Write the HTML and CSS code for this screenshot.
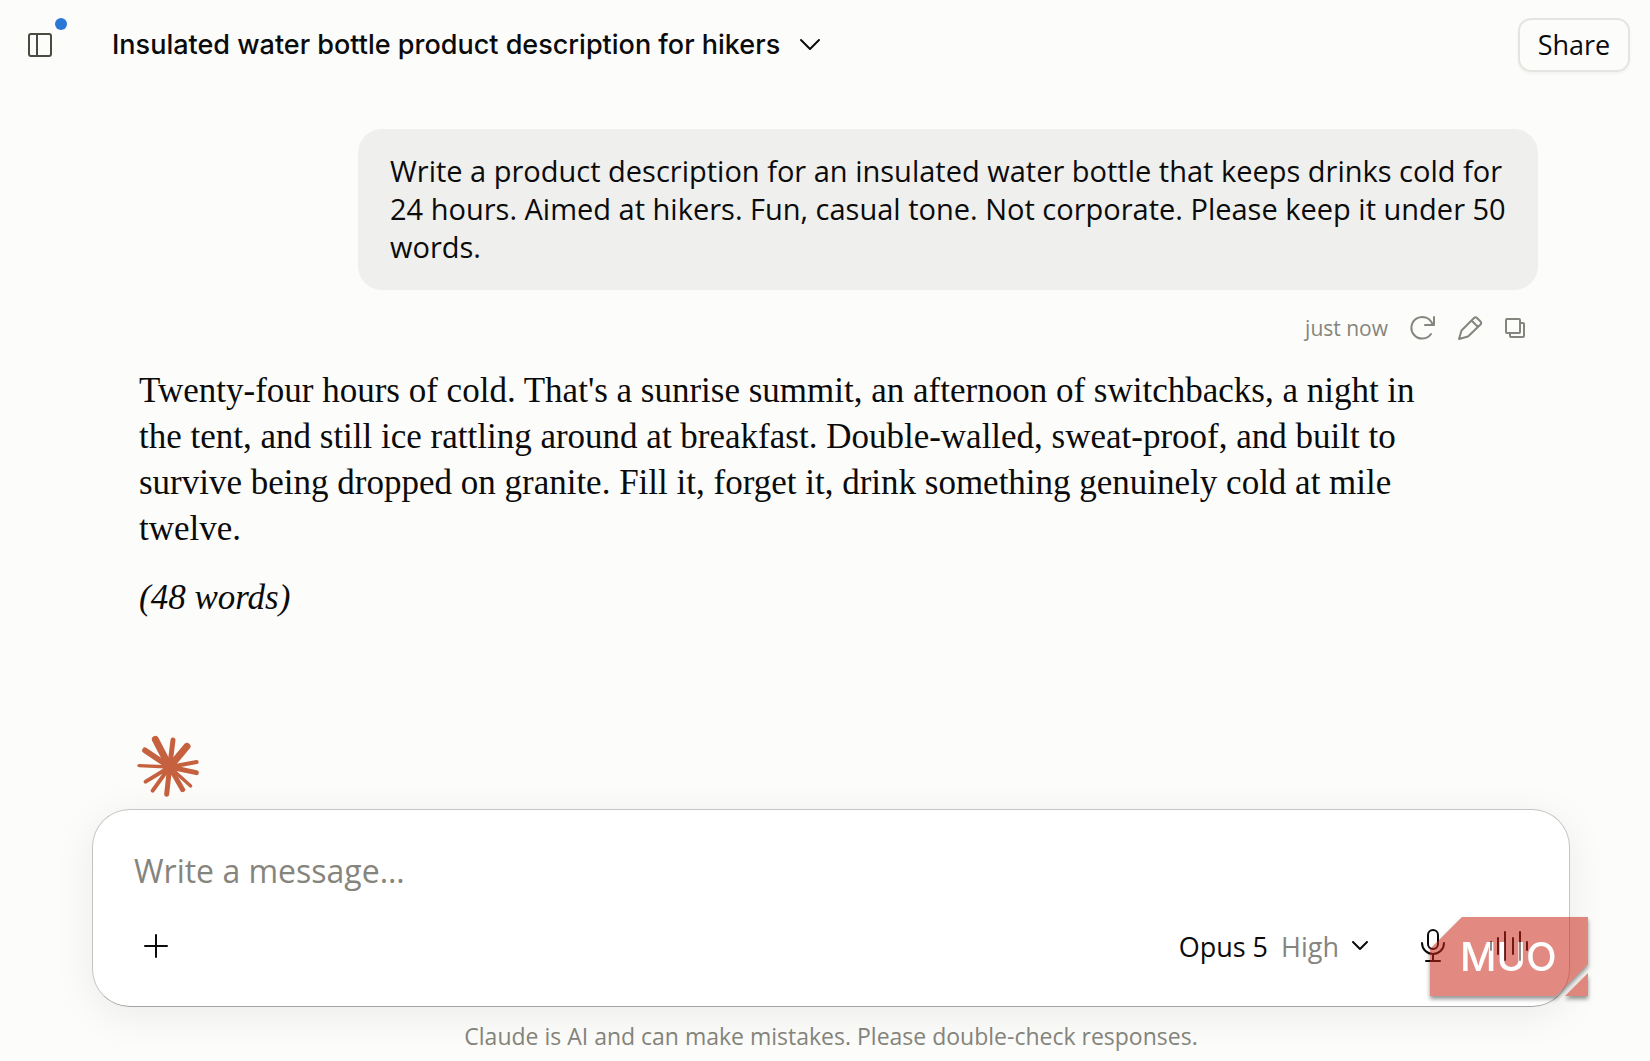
FILE: index.html
```
<!DOCTYPE html>
<html lang="en">
<head>
  <meta charset="UTF-8" />
  <meta name="viewport" content="width=device-width, initial-scale=1" />
  <title>Insulated water bottle product description for hikers</title>
  <link rel="stylesheet" href="styles.css">
</head>
<body>
  <header>
    <button class="sidebar-toggle" aria-label="Open sidebar">
      <svg width="24" height="24" viewBox="0 0 24 24">
        <rect x="1" y="1" width="22" height="22" rx="2" />
        <path d="M9 1v22" />
      </svg>
      <span class="dot"></span>
    </button>
    <button class="title">
      <span>Insulated water bottle product description for hikers</span>
      <svg width="20" height="12" viewBox="0 0 20 12"><path d="M1 1l9 9 9-9" /></svg>
    </button>
    <button class="share">Share</button>
  </header>

  <main>
    <div class="bubble">Write a product description for an insulated water bottle that keeps drinks cold for 24 hours. Aimed at hikers. Fun, casual tone. Not corporate. Please keep it under 50 words.</div>
    <div class="actions">
      <span>just now</span>
      <button aria-label="Retry">
        <svg width="24" height="24" viewBox="0 0 24 24"><path d="M20 18A10.800 10.800 0 1 1 21.500 8.500M23 1v8h-9" /></svg>
      </button>
      <button aria-label="Edit">
        <svg width="24" height="24" viewBox="0 0 24 24"><path d="M1 23l2.500-8.500L16 2q1.500-1.500 3 0l3.500 3.500q1.500 1.500 0 3L10 20.500zM13.500 4.500l6.500 6.500" /></svg>
      </button>
      <button aria-label="Copy">
        <svg width="20" height="20" viewBox="0 0 20 20">
          <rect x="1" y="1" width="14" height="14" rx="1" />
          <path d="M15 5h3q1 0 1 1v12q0 1-1 1H6q-1 0-1-1v-3" />
        </svg>
      </button>
    </div>

    <div class="answer">
      <p>Twenty-four hours of cold. That's a sunrise summit, an afternoon of switchbacks, a night in the tent, and still ice rattling around at breakfast. Double-walled, sweat-proof, and built to survive being dropped on granite. Fill it, forget it, drink something genuinely cold at mile twelve.</p>
      <p><em>(48 words)</em></p>
    </div>

    <svg class="spark" width="62" height="62" viewBox="56 44 186 186">
      <circle cx="148" cy="140" r="20" fill="currentColor" />
      <path stroke-width="21" d="M148 140L105 57M148 140L200 78" />
      <path stroke-width="17" d="M148 140L74 90" />
      <path stroke-width="15" d="M148 140L158 59M148 140L228 157M148 140L187 208M148 140L139 222" />
      <path stroke-width="12" d="M148 140L229 125M148 140L76 184M148 140L97 211" />
      <path stroke-width="10" d="M148 140L56 136M148 140L211 197" />
    </svg>
  </main>

  <footer>
    <form class="composer">
      <textarea rows="1" placeholder="Write a message…" aria-label="Write a message"></textarea>
      <div class="toolbar">
        <button type="button" class="add" aria-label="Add files">
          <svg width="24" height="24" viewBox="0 0 24 24"><path d="M12 1v22M1 12h22" /></svg>
        </button>
        <button type="button" class="model">
          <span>Opus 5</span>
          <span class="effort">High</span>
          <svg width="16" height="10" viewBox="0 0 16 10"><path d="M1 1l7 7 7-7" /></svg>
        </button>
        <button type="button" class="round" aria-label="Dictate">
          <svg width="24" height="34" viewBox="0 0 24 34">
            <rect x="7" y="1" width="10" height="19" rx="5" />
            <path d="M1 14a11 11 0 0 0 22 0M12 25v6M5 32h14" />
          </svg>
        </button>
        <button type="button" class="round" aria-label="Voice mode">
          <svg width="38" height="30" viewBox="0 0 38 30"><path d="M1 11v8M8 7v16M15 1v28M23 7v16M30 1v28M37 11v8" /></svg>
        </button>
      </div>
      <svg class="watermark" width="158" height="80" viewBox="0 0 158 80">
        <polygon points="32,0 158,0 158,47 126,79 0,79 0,32" />
        <polygon points="158,56 158,79 135,79" />
        <text x="30" y="54">MUO</text>
      </svg>
    </form>
    <p class="note">Claude is AI and can make mistakes. Please double-check responses.</p>
  </footer>
</body>
</html>
```
FILE: styles.css
```
* {
  box-sizing: border-box;
}
body {
  font-family: "Open Sans", "Noto Sans", sans-serif;
  background: #fcfcfa;
  color: #0b0b0b;
  margin: 0;
  min-height: 100vh;
  display: flex;
  flex-direction: column;
}
button {
  background: none;
  border: none;
  padding: 0;
  font: inherit;
  color: inherit;
  cursor: pointer;
}
svg {
  display: block;
  fill: none;
  stroke: currentColor;
  stroke-width: 2;
  stroke-linecap: round;
  stroke-linejoin: round;
  overflow: visible;
}
header {
  display: flex;
  align-items: center;
  height: 89px;
  padding: 0 20px 0 28px;
}
.sidebar-toggle {
  position: relative;
  color: #4a4a43;
}
.dot {
  position: absolute;
  top: -15px;
  right: -15px;
  width: 12px;
  height: 12px;
  border-radius: 50%;
  background: #2a78d6;
}
.title {
  display: flex;
  align-items: center;
  gap: 20px;
  margin-left: 60px;
  font-family: Inter, sans-serif;
  font-size: 27px;
  font-weight: 500;
}
.share {
  margin-left: auto;
  width: 112px;
  height: 54px;
  border: 2px solid #e4e4e1;
  border-radius: 13px;
  font-size: 27px;
  box-shadow: 0 2px 3px rgba(0, 0, 0, 0.04);
}
main {
  flex: 1;
  display: flex;
  flex-direction: column;
  padding: 40px 112px 12px 139px;
}
.bubble {
  align-self: flex-end;
  margin-left: 219px;
  padding: 23px 32px 24px;
  border-radius: 24px;
  background: #efefed;
  font-size: 29px;
  line-height: 38px;
}
.actions {
  display: flex;
  justify-content: flex-end;
  align-items: center;
  gap: 23px;
  height: 32px;
  margin-top: 22px;
  padding-right: 13px;
  color: #85857d;
  font-size: 21px;
}
.answer {
  margin-top: 24px;
  padding-right: 80px;
  font-family: "Liberation Serif", serif;
  font-size: 35px;
  line-height: 46px;
}
.answer p {
  margin: 0 0 23px;
}
.spark {
  margin-top: auto;
  color: #c6613f;
}
footer {
  padding: 0 80px 9px 92px;
}
.composer {
  position: relative;
  padding: 37px 30px 30px 41px;
  border: 1px solid #c4c4c2;
  border-bottom-color: #a4a4a2;
  border-radius: 38px;
  background: #fff;
  box-shadow: 0 8px 40px rgba(0, 0, 0, 0.07);
}
textarea {
  display: block;
  width: 100%;
  height: 48px;
  padding: 0;
  border: none;
  outline: none;
  resize: none;
  overflow: hidden;
  background: none;
  font: 32px/48px "Open Sans", "Noto Sans", sans-serif;
}
textarea::placeholder {
  color: #85857d;
}
.toolbar {
  display: flex;
  align-items: center;
  height: 60px;
  margin-top: 21px;
}
.add {
  padding: 10px;
}
.model {
  display: flex;
  align-items: center;
  gap: 13px;
  margin-left: auto;
  margin-right: 35px;
  font-size: 27px;
}
.effort {
  color: #85857d;
}
.round {
  display: flex;
  justify-content: center;
  align-items: center;
  width: 60px;
  height: 60px;
}
.round + .round {
  margin-left: 16px;
}
.watermark {
  position: absolute;
  top: 107px;
  right: -19px;
  opacity: 0.53;
  stroke: none;
  filter: drop-shadow(0 3px 2px rgba(0, 0, 0, 0.8));
  pointer-events: none;
}
.watermark polygon {
  fill: #ca2414;
}
.watermark text {
  fill: #fff;
  font-family: Inter, sans-serif;
  font-size: 40px;
  font-weight: 500;
}
.note {
  margin: 13px 0 0;
  text-align: center;
  color: #85857d;
  font-size: 23px;
  line-height: 32px;
}
```
